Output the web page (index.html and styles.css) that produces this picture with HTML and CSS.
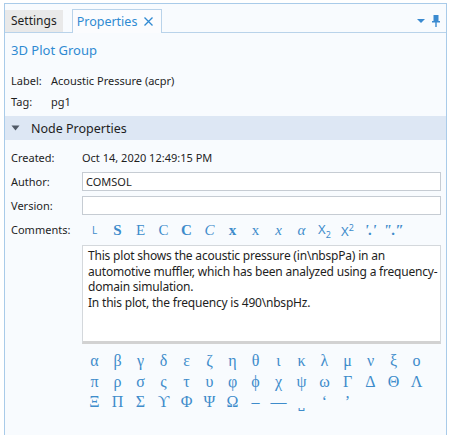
FILE: index.html
```html
<!DOCTYPE html>
<html lang="en">
<head>
    <meta charset="UTF-8">
    <title>Properties</title>
    <link rel="stylesheet" href="styles.css">
</head>
<body>
    <div class="window">
        <div class="tabbar">
            <div class="tab">Settings</div>
            <div class="tab active">Properties
                <svg class="close" width="9" height="9" viewBox="0 0 9 9"><path d="M0.5 0.5l8 8M8.5 0.5l-8 8" stroke="#2f8ad2" stroke-width="1.3"/></svg>
            </div>
            <div class="tab-tools">
                <svg width="10" height="6" viewBox="0 0 10 6"><path d="M1 1h8L5 5z" fill="#3a8ad0"/></svg>
                <svg width="8" height="12" viewBox="0 0 8 12"><path d="M1.5 0h5v6h1.5v1.5H4.7V12H3.3V7.5H0V6h1.5z" fill="#3a8ad0"/></svg>
            </div>
        </div>

        <div class="content">
            <div class="title">3D Plot Group</div>
            <div class="info">
                <div class="info-row"><span class="info-key">Label:</span><span>Acoustic Pressure (acpr)</span></div>
                <div class="info-row"><span class="info-key">Tag:</span><span>pg1</span></div>
            </div>

            <div class="section-head">
                <svg width="9" height="6" viewBox="0 0 9 6"><path d="M0.5 0.5h8L4.5 5.5z" fill="#505a66"/></svg>
                Node Properties
            </div>

            <div class="form">
                <div class="field-label">Created:</div>
                <div class="field-text">Oct 14, 2020 12:49:15 PM</div>

                <div class="field-label">Author:</div>
                <div class="input">COMSOL</div>

                <div class="field-label">Version:</div>
                <div class="input"></div>

                <div class="field-label comments-label">Comments:</div>
                <div>
                    <div class="toolbar">
                        <span class="sans small">L</span>
                        <span class="b">S</span>
                        <span>E</span>
                        <span>C</span>
                        <span class="b">C</span>
                        <span class="i">C</span>
                        <span class="b">x</span>
                        <span>x</span>
                        <span class="i">x</span>
                        <span class="i">α</span>
                        <span class="sans">X<sub>2</sub></span>
                        <span class="sans">X<sup>2</sup></span>
                        <span class="b i">'.'</span>
                        <span class="b i">".″</span>
                    </div>
                    <div class="textarea">This plot shows the acoustic pressure (in\nbspPa) in an automotive muffler, which has been analyzed using a frequency-domain simulation.<br>In this plot, the frequency is 490\nbspHz.</div>
                    <div class="greek">
                        <span>α</span><span>β</span><span>γ</span><span>δ</span><span>ε</span><span>ζ</span><span>η</span><span>θ</span><span>ι</span><span>κ</span><span>λ</span><span>μ</span><span>ν</span><span>ξ</span><span>ο</span>
                        <span>π</span><span>ρ</span><span>σ</span><span>ς</span><span>τ</span><span>υ</span><span>φ</span><span>ϕ</span><span>χ</span><span>ψ</span><span>ω</span><span>Γ</span><span>Δ</span><span>Θ</span><span>Λ</span>
                        <span>Ξ</span><span>Π</span><span>Σ</span><span>ϒ</span><span>Φ</span><span>Ψ</span><span>Ω</span><span>–</span><span>—</span><span>˽</span><span>‘</span><span>’</span>
                    </div>
                </div>
            </div>
        </div>
    </div>
</body>
</html>
```

FILE: styles.css
```css
body {
    margin: 0;
    padding: 3px 4px 0 4px;
    background-color: #ffffff;
    font-family: "Noto Sans", "Open Sans", Arial, sans-serif;
    font-size: 11px;
    color: #1e1e1e;
}

.window {
    height: 432px;
    border: 1px solid #a9cbe9;
    border-bottom: none;
    background-color: #f8fbfe;
    box-sizing: border-box;
}

.tabbar {
    display: flex;
    align-items: flex-end;
    height: 29px;
    border-bottom: 1px solid #b9d3ea;
    box-sizing: border-box;
    padding-right: 6px;
}

.tab {
    height: 22px;
    line-height: 22px;
    padding: 0 6px;
    font-size: 12px;
    background-color: #e9e9e9;
    margin-right: 9px;
}

.tab.active {
    display: flex;
    align-items: center;
    background-color: #fbfcfe;
    color: #2f8ad2;
    border: 1px solid #b9d3ea;
    border-bottom: none;
    padding: 0 8px 0 4px;
    margin-bottom: -1px;
    height: 23px;
    font-size: 12.5px;
}

.close {
    margin-left: 7px;
}

.tab-tools {
    margin-left: auto;
    display: flex;
    align-items: center;
    gap: 6px;
    height: 22px;
}

.title {
    color: #2f8ad2;
    font-size: 13px;
    padding: 8px 6px 0 6px;
    height: 27px;
    box-sizing: border-box;
    margin-bottom: 10px;
}

.info {
    padding: 0 6px;
}

.info-row {
    height: 21px;
    line-height: 21px;
}

.info-key {
    display: inline-block;
    width: 40px;
}

.section-head {
    margin-top: 4px;
    height: 24px;
    background-color: #dde7f4;
    display: flex;
    align-items: center;
    gap: 11px;
    padding-left: 6px;
    font-size: 12.5px;
}

.form {
    display: grid;
    grid-template-columns: 71px 1fr;
    row-gap: 5px;
    padding: 8px 5px 0 6px;
    align-items: center;
}

.field-text {
    height: 19px;
    line-height: 19px;
}

.input {
    height: 19px;
    line-height: 17px;
    background-color: #ffffff;
    border: 1px solid #c6ccd3;
    padding: 0 3px;
    box-sizing: border-box;
}

.comments-label {
    align-self: start;
    line-height: 19px;
}

.toolbar {
    display: grid;
    grid-template-columns: repeat(14, 23px);
    height: 19px;
    align-items: center;
    padding-left: 1px;
    font-family: "Liberation Serif", "DejaVu Serif", serif;
    font-size: 15px;
    color: #3e8ccb;
}

.toolbar span {
    text-align: center;
    white-space: nowrap;
}

.toolbar .b {
    font-weight: bold;
}

.toolbar .i {
    font-style: italic;
}

.toolbar .sans {
    font-family: "Noto Sans", sans-serif;
    font-size: 13px;
}

.toolbar .small {
    font-size: 10px;
}

.toolbar sub, .toolbar sup {
    font-size: 9px;
}

.textarea {
    margin-top: 6px;
    height: 99px;
    background-color: #ffffff;
    border: 1px solid #d4d8dc;
    border-bottom: 3px solid #d2d2d2;
    padding: 2px 2px 2px 5px;
    box-sizing: border-box;
    font-size: 12px;
    letter-spacing: -0.2px;
    line-height: 15.5px;
}

.greek {
    display: grid;
    grid-template-columns: repeat(15, 23px);
    padding: 7px 0 0 1px;
    font-family: "Liberation Serif", "DejaVu Serif", serif;
    font-size: 16px;
    line-height: 20.5px;
    color: #3e8ccb;
}

.greek span {
    text-align: center;
}
```
